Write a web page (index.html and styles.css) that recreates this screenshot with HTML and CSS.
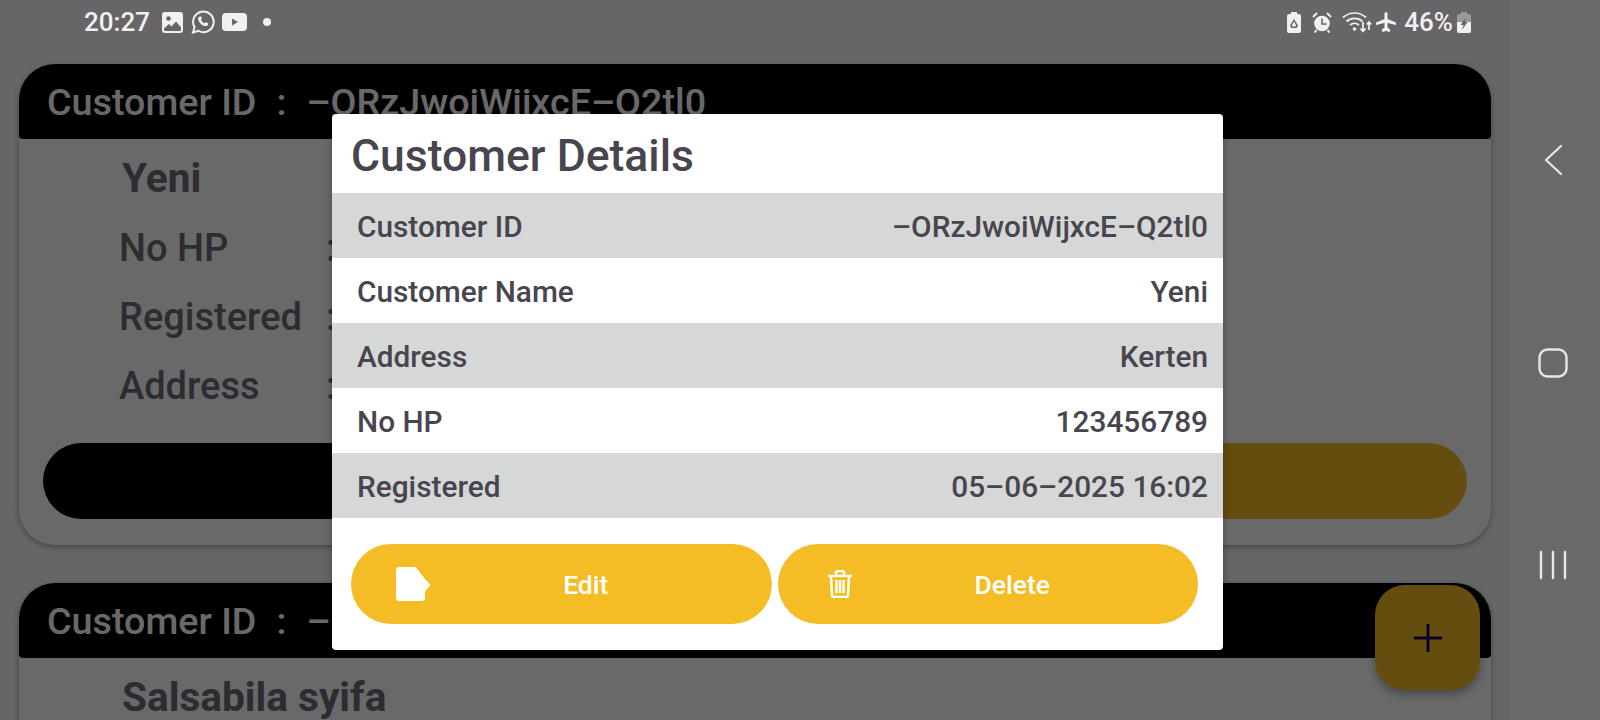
FILE: index.html
```html
<!doctype html>
<html lang="en">

<head>
    <meta charset="UTF-8" />
    <meta name="viewport" content="width=device-width, initial-scale=1.0" />
    <title>Customer Details</title>
    <link rel="stylesheet" href="styles.css">
</head>

<body>
    <div class="app">
        <main class="main">
            <!-- status bar -->
            <div class="status-bar">
                <div class="status-left">
                    <span class="status-time">20:27</span>
                    <svg class="ic-image" width="21" height="21" viewBox="0 0 21 21">
                        <path fill="#f1f1f1" fill-rule="evenodd" d="M3 0h15a3 3 0 0 1 3 3v15a3 3 0 0 1-3 3H3a3 3 0 0 1-3-3V3a3 3 0 0 1 3-3zM2 16.500V18a1 1 0 0 0 1 1h15a1 1 0 0 0 1-1v-2.500l-5-6-4.500 5-2.500-2.500z" />
                        <circle cx="6.500" cy="6.500" r="2.300" fill="#666468" />
                    </svg>
                    <svg class="ic-whatsapp" width="24" height="24" viewBox="0 0 24 24">
                        <path fill="none" stroke="#f1f1f1" stroke-width="2" d="M2 22.500l1.500-5.500a10.300 10.300 0 1 1 4 3.900z" />
                        <path fill="#f1f1f1" d="M8.500 6.500c.9-.5 1.400-.4 1.700.3l.7 1.700c.1.400-.4 1-.8 1.500.7 1.500 1.900 2.700 3.400 3.300.5-.5 1-1.200 1.400-1.100l1.900.9c.5.300.5.900.2 1.600-.5 1.100-1.900 1.600-3.200 1.300-3.300-.8-5.700-3.200-6.500-6.100-.3-1.300 0-2.700 1.200-3.400z" />
                    </svg>
                    <svg class="ic-youtube" width="25" height="18" viewBox="0 0 25 18">
                        <path fill="#f1f1f1" fill-rule="evenodd" d="M4 0h17a4 4 0 0 1 4 4v10a4 4 0 0 1-4 4H4a4 4 0 0 1-4-4V4a4 4 0 0 1 4-4zM10 5.500v7l6-3.500z" />
                    </svg>
                    <span class="status-dot"></span>
                </div>
                <div class="status-right">
                    <svg class="ic-batt" width="14" height="21" viewBox="0 0 14 21">
                        <path fill="#f1f1f1" fill-rule="evenodd" d="M4 0h6v2h2a2 2 0 0 1 2 2v15a2 2 0 0 1-2 2H2a2 2 0 0 1-2-2V4a2 2 0 0 1 2-2h2zM7 7l-4 6.500 1.500 2.500h5l1.500-2.500zM7 9.500l2.200 4-.8 1H5.600l-.8-1z" />
                    </svg>
                    <svg class="ic-alarm" width="20" height="21" viewBox="0 0 20 21">
                        <circle cx="10" cy="11.500" r="7.800" fill="#f1f1f1" />
                        <path fill="none" stroke="#666468" stroke-width="1.600" d="M10 6.500v5.500h4.500" />
                        <path fill="none" stroke="#f1f1f1" stroke-width="2" d="M1 5l4-4M19 5l-4-4M4.500 18l-2 2.500M15.500 18l2 2.500" />
                    </svg>
                    <svg class="ic-wifi" width="30" height="24" viewBox="0 0 30 24">
                        <g fill="none" stroke="#f1f1f1" stroke-width="1.700">
                            <path d="M1 7.500a17 17 0 0 1 23 0" />
                            <path d="M4.500 11.500a12 12 0 0 1 16 0" />
                            <path d="M8 15a7 7 0 0 1 9 0" />
                            <path d="M21 12v9M18.500 18.500l2.500 3 2.500-3" />
                            <path d="M27 20v-8M24.800 14.500l2.200-2.500 2.200 2.500" />
                        </g>
                        <circle cx="12.500" cy="19" r="1.800" fill="#f1f1f1" />
                    </svg>
                    <svg class="ic-plane" width="20" height="20" viewBox="0 0 20 20">
                        <path fill="#f1f1f1" d="M10 0c1 0 1.500 1.200 1.500 2.500V7l8.500 3.500V13l-8.500-2v4.500l2.500 2V20l-4-1-4 1v-2.500l2.500-2V11L0 13v-2.500L8.500 7V2.500C8.500 1.200 9 0 10 0z" />
                    </svg>
                    <span class="status-pct">46%</span>
                    <svg class="ic-charge" width="14" height="21" viewBox="0 0 14 21">
                        <path fill="#9a999b" d="M4 0h6v2h2a2 2 0 0 1 2 2v6H0V4a2 2 0 0 1 2-2h2z" />
                        <path fill="#f1f1f1" d="M0 10h14v9a2 2 0 0 1-2 2H2a2 2 0 0 1-2-2z" />
                        <path fill="#666468" d="M9 5L3.500 13h3l-1.500 5 5.500-8h-3z" />
                    </svg>
                </div>
            </div>

            <!-- customer list -->
            <div class="customer-list">
                <section class="card">
                    <div class="card-header">
                        <span class="card-header-label">Customer ID</span>
                        <span class="card-header-colon">:</span>
                        <span>–ORzJwoiWijxcE–Q2tl0</span>
                    </div>
                    <div class="card-body">
                        <div class="card-name">Yeni</div>
                        <div class="card-row"><span class="card-label">No HP</span><span>:</span></div>
                        <div class="card-row"><span class="card-label">Registered</span><span>:</span></div>
                        <div class="card-row"><span class="card-label">Address</span><span>:</span></div>
                        <div class="card-actions">
                            <div class="card-btn card-btn-dark"></div>
                            <div class="card-btn card-btn-yellow"></div>
                        </div>
                    </div>
                </section>

                <section class="card">
                    <div class="card-header">
                        <span class="card-header-label">Customer ID</span>
                        <span class="card-header-colon">:</span>
                        <span>–O</span>
                    </div>
                    <div class="card-body">
                        <div class="card-name">Salsabila syifa</div>
                    </div>
                </section>
            </div>

            <div class="fab">
                <svg width="28" height="28" viewBox="0 0 28 28">
                    <path stroke="#21005d" stroke-width="3" d="M14 0v28M0 14h28" />
                </svg>
            </div>
        </main>

        <!-- navigation bar -->
        <nav class="nav-bar">
            <svg class="nav-icon" width="20" height="32" viewBox="0 0 20 32">
                <path fill="none" stroke="#e6e6e6" stroke-width="2.200" stroke-linecap="round" stroke-linejoin="round" d="M18 2L3 16l15 14" />
            </svg>
            <svg class="nav-icon" width="30" height="30" viewBox="0 0 30 30">
                <rect x="1.500" y="1.500" width="27" height="27" rx="8" fill="none" stroke="#e6e6e6" stroke-width="2.400" />
            </svg>
            <svg class="nav-icon" width="28" height="30" viewBox="0 0 28 30">
                <path stroke="#e6e6e6" stroke-width="2.400" stroke-linecap="round" d="M2 2v26M14 2v26M26 2v26" />
            </svg>
        </nav>

        <div class="scrim"></div>

        <!-- dialog -->
        <div class="dialog">
            <h2 class="dialog-title">Customer Details</h2>
            <div class="detail-row"><span>Customer ID</span><span>–ORzJwoiWijxcE–Q2tl0</span></div>
            <div class="detail-row"><span>Customer Name</span><span>Yeni</span></div>
            <div class="detail-row"><span>Address</span><span>Kerten</span></div>
            <div class="detail-row"><span>No HP</span><span>123456789</span></div>
            <div class="detail-row"><span>Registered</span><span>05–06–2025 16:02</span></div>
            <div class="dialog-actions">
                <button type="button" class="action-btn">
                    <svg width="34" height="34" viewBox="0 0 34 34">
                        <path fill="#fff" d="M3 0h15c1 0 2 .5 2.700 1.300L29 12c.5.600 1 1 1.500 1.500l2.800 3c.9 1 .9 2 0 3l-3 3.200c-1 1-1.300 1.800-1.300 3V31c0 1.700-1.300 3-3 3H3c-1.700 0-3-1.300-3-3V3c0-1.700 1.300-3 3-3z" />
                    </svg>
                    <span class="action-label">Edit</span>
                </button>
                <button type="button" class="action-btn action-btn-delete">
                    <svg width="24" height="28" viewBox="0 0 24 28">
                        <g fill="none" stroke="#fff" stroke-width="2.400">
                            <path d="M0 6h24" />
                            <path d="M8 5V2.500A1.500 1.500 0 0 1 9.500 1h5A1.500 1.500 0 0 1 16 2.500V5" />
                            <path d="M3 6l1 19a2 2 0 0 0 2 2h12a2 2 0 0 0 2-2l1-19" />
                            <path d="M8.500 10v13M12 10v13M15.500 10v13" />
                        </g>
                    </svg>
                    <span class="action-label">Delete</span>
                </button>
            </div>
        </div>
    </div>
</body>

</html>
```

FILE: styles.css
```css
*,
*::before,
*::after {
    box-sizing: border-box;
}

body {
    margin: 0;
    font-family: Roboto, "Liberation Sans", sans-serif;
}

.app {
    display: flex;
    position: relative;
    width: 1600px;
    height: 720px;
    overflow: hidden;
    background: #f9f6fd;
}

.main {
    position: relative;
    flex: 1;
    overflow: hidden;
}

/* status bar, stays bright above the scrim */
.status-bar {
    display: flex;
    justify-content: space-between;
    align-items: center;
    height: 44px;
    margin-bottom: 20px;
    padding: 0 39px 0 84px;
    color: #f1f1f1;
    font-size: 26px;
    font-weight: 500;
}

.status-left,
.status-right {
    display: flex;
    align-items: center;
    position: relative;
    z-index: 30;
}

.status-time {
    margin-right: 12px;
}

.ic-whatsapp {
    margin-left: 8px;
}

.ic-youtube {
    margin-left: 7px;
}

.status-dot {
    width: 8px;
    height: 8px;
    margin-left: 16px;
    border-radius: 50%;
    background: #f1f1f1;
}

.ic-alarm {
    margin-left: 11px;
}

.ic-wifi {
    margin-left: 10px;
}

.ic-plane {
    margin-left: 4px;
}

.status-pct {
    margin-left: 8px;
    margin-right: 4px;
}

/* cards */
.customer-list {
    display: flex;
    flex-direction: column;
    gap: 38px;
    padding: 0 19px;
}

.card {
    flex: none;
    border-radius: 36px;
    background: #fff;
    box-shadow: 0 2px 6px rgba(0, 0, 0, 0.35);
}

.card-header {
    display: flex;
    align-items: center;
    height: 75px;
    padding: 0 29px 0 28px;
    border-radius: 36px 36px 4px 4px;
    background: #000;
    color: #fff;
    font-size: 37.7px;
    font-weight: 500;
    white-space: nowrap;
}

.card-header-colon {
    margin: 0 20px;
}

.card-body {
    padding: 14px 24px 26px;
    color: #6c6b78;
    font-size: 38px;
    font-weight: 500;
}

.card-name {
    height: 50px;
    margin-bottom: 10px;
    margin-left: 79px;
    font-size: 40.6px;
    font-weight: 700;
    line-height: 50px;
    white-space: nowrap;
}

.card-row {
    display: flex;
    align-items: center;
    height: 69px;
    margin-left: 76px;
}

.card-label {
    width: 207px;
}

.card-actions {
    display: flex;
    margin-top: 23px;
}

.card-btn {
    flex: 1;
    height: 76px;
}

.card-btn-dark {
    border-radius: 38px 0 0 38px;
    background: #000;
}

.card-btn-yellow {
    border-radius: 0 38px 38px 0;
    background: #f4bc25;
}

.fab {
    display: flex;
    justify-content: center;
    align-items: center;
    position: absolute;
    left: 1375px;
    top: 585px;
    width: 105px;
    height: 105px;
    border-radius: 30px;
    background: #f4bc25;
    box-shadow: 0 4px 10px rgba(0, 0, 0, 0.35);
}

/* nav bar */
.nav-bar {
    display: flex;
    flex-direction: column;
    align-items: center;
    gap: 172px;
    width: 90px;
    padding: 144px 24px 0 20px;
    background: #ffffff;
}

.nav-icon {
    position: relative;
    z-index: 30;
}

.scrim {
    position: absolute;
    inset: 0;
    z-index: 10;
    background: rgba(0, 0, 0, 0.59);
}

/* dialog */
.dialog {
    position: absolute;
    left: 332px;
    top: 114px;
    z-index: 20;
    width: 891px;
    height: 536px;
    border-radius: 4px;
    background: #fff;
    color: #49454f;
    box-shadow: 0 2px 8px rgba(0, 0, 0, 0.3);
}

.dialog-title {
    height: 79px;
    margin: 0;
    padding-left: 19px;
    font-size: 44.5px;
    font-weight: 500;
    line-height: 84px;
}

.detail-row {
    display: flex;
    justify-content: space-between;
    align-items: center;
    height: 65px;
    padding: 2px 15px 0 25px;
    font-size: 29.8px;
    font-weight: 500;
}

.detail-row:nth-of-type(odd) {
    background: #d6d8d7;
}

.dialog-actions {
    display: flex;
    gap: 6px;
    padding: 26px 25px 0 19px;
}

.action-btn {
    display: flex;
    flex: 1;
    align-items: center;
    height: 80px;
    padding: 0 30px 0 45px;
    border: 0;
    border-radius: 40px;
    background: #f4bc25;
    color: #fff;
    font-family: inherit;
    font-size: 26.5px;
    font-weight: 500;
}

.action-btn-delete svg {
    margin-left: 5px;
    margin-right: 5px;
}

.action-label {
    flex: 1;
    text-align: center;
}
```
